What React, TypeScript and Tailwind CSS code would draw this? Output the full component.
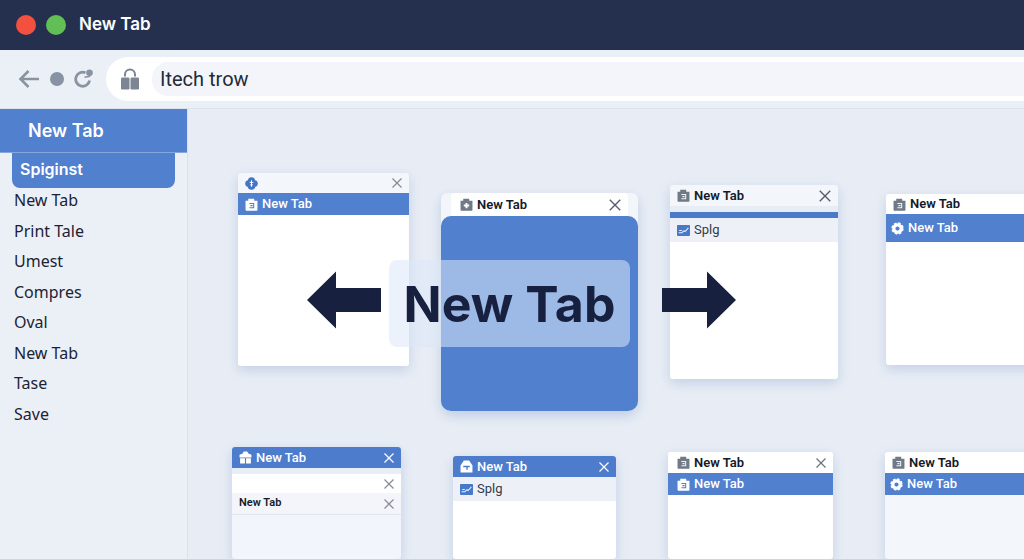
import type { ReactNode } from "react";
import { clsx } from "clsx";

const MENU_ITEMS = [
  "New Tab",
  "Print Tale",
  "Umest",
  "Compres",
  "Oval",
  "New Tab",
  "Tase",
  "Save",
];

export default function App() {
  return (
    <div className="flex h-screen w-full flex-col overflow-hidden bg-[#e8edf5] font-[Inter,sans-serif] text-[#1c2333]">
      <TitleBar />
      <Toolbar />
      <div className="flex min-h-0 flex-1">
        <Sidebar />
        <Canvas />
      </div>
    </div>
  );
}

function TitleBar() {
  return (
    <header className="flex h-[50px] shrink-0 items-center bg-[#25304e] pl-4">
      <button aria-label="Close window" className="h-5 w-5 rounded-full bg-[#f4503f]" />
      <button aria-label="Expand window" className="ml-[10px] h-5 w-5 rounded-full bg-[#62bf55]" />
      <h1 className="ml-[13px] text-[17px] font-semibold text-white">New Tab</h1>
    </header>
  );
}

function Toolbar() {
  return (
    <div className="flex h-[59px] shrink-0 items-center border-b border-[#dde3ec] bg-[#ebf0f7] pl-[18px]">
      <button aria-label="Back">
        <svg width="22" height="20" viewBox="0 0 22 20" fill="none" stroke="#8a93a0" strokeWidth="2.6">
          <path d="M21 10H3M10.500 2 2.500 10l8 8" />
        </svg>
      </button>
      <button aria-label="Home" className="ml-[10px] h-[14px] w-[14px] rounded-full bg-[#8793a3]" />
      <button aria-label="Reload" className="ml-[10px]">
        <svg width="20" height="20" viewBox="0 0 20 20" fill="none">
          <path d="M11.500 3.800A7 7 0 1 0 15.600 11.500" stroke="#8a93a0" strokeWidth="2.800" />
          <path d="M10.500 8.300l5-1V4" stroke="#8a93a0" strokeWidth="1.500" />
          <circle cx="15.500" cy="3.700" r="3.300" fill="#8793a3" />
        </svg>
      </button>
      <div className="ml-3 flex h-11 flex-1 items-center rounded-l-full bg-white pl-[14px]">
        <svg width="20" height="22" viewBox="0 0 20 22" fill="none">
          <path d="M5 8.500V6.500a5 5 0 0 1 10 0v2" stroke="#7c8591" strokeWidth="2" />
          <rect x="1" y="9.500" width="8.500" height="12" rx="1.200" fill="#7c8591" />
          <rect x="10.500" y="9.500" width="8.500" height="12" rx="1.200" fill="#7c8591" />
        </svg>
        <input
          aria-label="Address"
          defaultValue="Itech trow"
          className="ml-3 h-[34px] min-w-0 flex-1 rounded-l-2xl bg-[#f3f5fa] pl-2 font-['Roboto',sans-serif] text-xl text-[#232a3b] outline-none"
        />
      </div>
    </div>
  );
}

function Sidebar() {
  return (
    <aside className="w-[188px] shrink-0 border-r border-[#dae1ec] bg-[#ebf0f7]">
      <h2 className="flex h-11 items-center border-b border-[#86a6de] bg-[#5080ce] pl-7 text-lg font-semibold text-white">
        New Tab
      </h2>
      <nav className="flex flex-col font-['Noto_Sans',sans-serif]">
        <a
          href="#"
          className="mr-3 ml-3 flex h-[35px] items-center rounded-b-lg bg-[#5080ce] pb-1 pl-2 font-[Inter,sans-serif] text-base font-semibold text-white"
        >
          Spiginst
        </a>
        <div className="flex h-[238px] flex-col justify-between pl-[14px]">
          {MENU_ITEMS.map((item, i) => (
            <a key={i} href="#" className="text-base">
              {item}
            </a>
          ))}
        </div>
      </nav>
    </aside>
  );
}

function Canvas() {
  return (
    <main className="relative flex min-w-0 flex-1 flex-col gap-9 overflow-hidden pt-16">
      <div className="flex items-start gap-8 pl-[50px]">
        <Card className="w-[171px]">
          <Bar className="h-5 bg-[#f3f6fb] pl-[7px]">
            <BadgeIcon />
            <Close className="ml-auto text-[#858b95]" />
          </Bar>
          <Bar className="h-[22px] bg-[#5080ce] pl-[7px] text-white">
            <BagIcon />
            <Label className="font-medium">New Tab</Label>
          </Bar>
          <div className="h-[151px] bg-white" />
        </Card>

        <div className="mt-5 w-[197px] shrink-0 rounded-t-md rounded-b-xl bg-[#f2f5fa] shadow-[0_5px_12px_rgba(90,125,185,0.28)]">
          <div className="px-[10px]">
            <Bar className="h-[23px] rounded-t bg-white pl-[9px]">
              <BagIcon className="text-[#707986]" plus />
              <Label className="font-semibold text-[#151a28]">New Tab</Label>
              <Close className="ml-auto text-[#555b66]" size={14} />
            </Bar>
          </div>
          <div className="h-[195px] rounded-[10px] bg-[#5080ce]" />
        </div>

        <Card className="mt-3 w-[168px]">
          <Bar className="h-[21px] bg-[#f3f6fb] pl-[7px]">
            <BagIcon className="text-[#707986]" />
            <Label className="font-semibold text-[#151a28]">New Tab</Label>
            <Close className="ml-auto text-[#555b66]" size={14} />
          </Bar>
          <div className="h-[6px] bg-[#e8edf5]" />
          <div className="h-[6px] bg-[#4d7ac8]" />
          <Bar className="h-6 bg-[#edf0f6] pl-[7px]">
            <ChartIcon />
            <Label className="text-[#343a48]">Splg</Label>
          </Bar>
          <div className="h-[137px] bg-white" />
        </Card>

        <Card className="mt-[21px] ml-4 w-[170px]">
          <Bar className="h-5 bg-white pl-[7px]">
            <BagIcon className="text-[#707986]" />
            <Label className="font-semibold text-[#151a28]">New Tab</Label>
          </Bar>
          <Bar className="h-7 bg-[#5080ce] pl-[5px] text-white">
            <GearIcon />
            <Label className="font-medium">New Tab</Label>
          </Bar>
          <div className="h-[123px] bg-white" />
        </Card>
      </div>

      <div className="flex min-h-28 flex-1 items-stretch gap-[52px] pl-11">
        <Card className="w-[169px] bg-[#f2f5fb]">
          <Bar className="h-[21px] bg-[#4d7ccd] pl-[7px] text-white">
            <GiftIcon />
            <Label className="font-medium">New Tab</Label>
            <Close className="ml-auto" />
          </Bar>
          <div className="h-[6px] bg-[#e8eef7]" />
          <Bar className="h-[19px] bg-white">
            <Close className="ml-auto text-[#858b95]" />
          </Bar>
          <Bar className="h-[22px] border-b border-[#e1e5ec] bg-[#f3f5fa] pl-[7px]">
            <span className="font-['Roboto',sans-serif] text-[11px] font-semibold text-[#151a28]">
              New Tab
            </span>
            <Close className="ml-auto text-[#858b95]" />
          </Bar>
        </Card>

        <Card className="mt-[9px] w-[163px] bg-white">
          <Bar className="h-[21px] bg-[#4d7ccd] pl-[7px] text-white">
            <HouseIcon />
            <Label className="font-medium">New Tab</Label>
            <Close className="ml-auto" />
          </Bar>
          <Bar className="h-6 bg-[#edf1f7] pl-[7px]">
            <ChartIcon />
            <Label className="text-[#343a48]">Splg</Label>
          </Bar>
        </Card>

        <Card className="mt-[5px] w-[165px] bg-white">
          <Bar className="h-[21px] bg-white pl-[9px]">
            <BagIcon className="text-[#707986]" />
            <Label className="font-semibold text-[#151a28]">New Tab</Label>
            <Close className="ml-auto text-[#6b717c]" />
          </Bar>
          <Bar className="h-[22px] bg-[#5080ce] pl-[9px] text-white">
            <BagIcon />
            <Label className="font-medium">New Tab</Label>
          </Bar>
        </Card>

        <Card className="mt-[5px] w-[170px] bg-[#f3f6fb]">
          <Bar className="h-[21px] bg-white pl-[7px]">
            <BagIcon className="text-[#707986]" />
            <Label className="font-semibold text-[#151a28]">New Tab</Label>
          </Bar>
          <Bar className="h-[22px] bg-[#5080ce] pl-[5px] text-white">
            <GearIcon />
            <Label className="font-medium">New Tab</Label>
          </Bar>
        </Card>
      </div>

      {/* Switcher label floats over the windows */}
      <div className="absolute top-[151px] left-[119px] flex items-center text-[#17213f]">
        <button aria-label="Previous tab" className="-mt-2">
          <BigArrow />
        </button>
        <div className="ml-2 flex h-[87px] w-[241px] items-center justify-center rounded-lg bg-[#dce8f7]/55 text-[50px] leading-none font-bold whitespace-nowrap">
          New Tab
        </div>
        <button aria-label="Next tab" className="-mt-2 ml-8 rotate-180">
          <BigArrow />
        </button>
      </div>
    </main>
  );
}

function Card({ className, children }: { className?: string; children: ReactNode }) {
  return (
    <section
      className={clsx(
        "shrink-0 overflow-hidden rounded-[3px] shadow-[0_4px_12px_rgba(90,125,185,0.26)]",
        className,
      )}
    >
      {children}
    </section>
  );
}

function Bar({ className, children }: { className?: string; children: ReactNode }) {
  return <div className={clsx("flex items-center pr-[6px]", className)}>{children}</div>;
}

function Label({ className, children }: { className?: string; children: ReactNode }) {
  return (
    <span
      className={clsx(
        "ml-1 font-['Roboto',sans-serif] text-[13px] whitespace-nowrap",
        className,
      )}
    >
      {children}
    </span>
  );
}

function Close({ className, size = 12 }: { className?: string; size?: number }) {
  return (
    <button aria-label="Close tab" className={className}>
      <svg width={size} height={size} viewBox="0 0 12 12" fill="none" stroke="currentColor" strokeWidth="1.200">
        <path d="M1.500 1.500l9 9M10.500 1.500l-9 9" />
      </svg>
    </button>
  );
}

function BigArrow() {
  return (
    <svg width="74" height="58" viewBox="0 0 74 58" fill="currentColor">
      <path d="M0 29 29 0.500V17H74V41H29V57.500Z" />
    </svg>
  );
}

function BagIcon({ className, plus }: { className?: string; plus?: boolean }) {
  return (
    <svg width="13" height="13" viewBox="0 0 12 12" fill="none" className={className}>
      <path d="M0.500 2.500h2.500V0.700h5.500v1.800h3V11a0.700 0.700 0 0 1-.7.7H1.200a0.700 0.700 0 0 1-.7-.7Z" fill="currentColor" />
      {plus ? (
        <path d="M6 4.500v5M3.500 7h5" stroke="#fff" strokeWidth="1.800" />
      ) : (
        <path
          d="M4 5h4v4H4M5 7h2"
          className={className ? "stroke-[#eef1f6]" : "stroke-[#5080ce]"}
          strokeWidth="1"
        />
      )}
    </svg>
  );
}

function BadgeIcon() {
  return (
    <svg width="13" height="13" viewBox="0 0 12 12" fill="#4475c8">
      <circle cx="6" cy="3.500" r="3.300" />
      <circle cx="3.300" cy="6" r="3.100" />
      <circle cx="8.700" cy="6" r="3.100" />
      <circle cx="6" cy="8.300" r="3.500" />
      <path d="M6 3v6M4.300 5h3.400M4.800 7.300h2.400" stroke="#fff" strokeWidth="0.900" />
    </svg>
  );
}

function GearIcon() {
  return (
    <svg width="13" height="13" viewBox="0 0 12 12" fill="none">
      <circle cx="6" cy="6" r="4.800" stroke="#fff" strokeWidth="1.800" strokeDasharray="2.300 1.470" />
      <circle cx="6" cy="6" r="3.400" stroke="#fff" strokeWidth="3" />
      <path d="M6 4.500v3M4.500 6h3" stroke="#5080ce" strokeWidth="1.200" />
    </svg>
  );
}

function GiftIcon() {
  return (
    <svg width="13" height="13" viewBox="0 0 12 12" fill="#fff">
      <path d="M3 2.500 4.500 0.500h3L9 2.500l2.500 1V6H.5V3.500Z" />
      <path d="M1 6.800h4.500v4.700H1ZM6.500 6.800H11v4.700H6.500Z" />
    </svg>
  );
}

function HouseIcon() {
  return (
    <svg width="13" height="13" viewBox="0 0 12 12" fill="none">
      <path d="M3.500.5h5l1 1.500L11.500 5v6.500H.5V5l2-3Z" fill="#fff" />
      <path d="M3 6h6M6.500 6v3" stroke="#4d7ccd" strokeWidth="1.300" />
    </svg>
  );
}

function ChartIcon() {
  return (
    <svg width="13" height="13" viewBox="0 0 12 12" fill="none">
      <rect y="1" width="12" height="10" rx="0.800" fill="#4778ca" />
      <path d="M1.500 8h3l2-1.800 1 .8L10.500 3.500M2 6h2.500" stroke="#e8effa" strokeWidth="1" />
    </svg>
  );
}
